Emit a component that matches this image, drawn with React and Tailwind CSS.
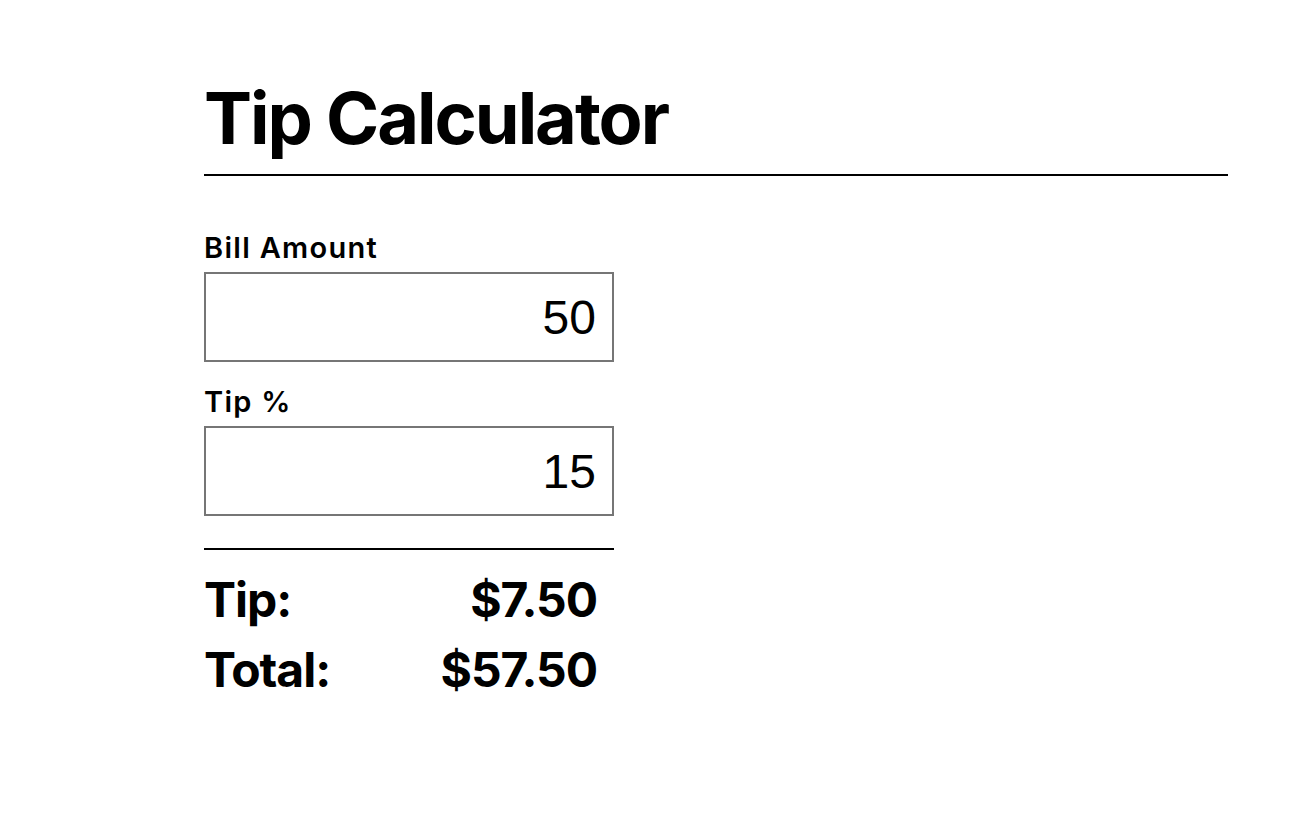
import { useState } from 'react';

export default function App() {
  const [bill, setBill] = useState('50');
  const [tip, setTip] = useState('15');

  const billNum = parseFloat(bill) || 0;
  const tipNum = parseFloat(tip) || 0;
  const tipAmount = (billNum * tipNum) / 100;
  const total = billNum + tipAmount;

  return (
    <div className="min-h-screen bg-white text-black font-['Inter',sans-serif] pl-[204px] pr-[88px] pt-[82px]">
      <h1 className="text-[72px] font-bold leading-none tracking-[-0.028em]">Tip Calculator</h1>
      <div className="mt-[20px] h-[2px] bg-black" />

      <div className="w-[410px] flex flex-col">
        <label className="mt-[56px] text-[29px] leading-[32px] font-semibold tracking-[0.045em]">Bill Amount</label>
        <input
          type="text"
          inputMode="decimal"
          value={bill}
          onChange={e => setBill(e.target.value)}
          className="mt-[8px] h-[90px] w-full border-2 border-[#767676] bg-white px-[16px] text-right text-[48px] font-['Liberation_Sans',Arial,sans-serif] outline-none"
        />

        <label className="mt-[24px] text-[29px] leading-[32px] font-semibold tracking-[0.045em]">Tip %</label>
        <input
          type="text"
          inputMode="decimal"
          value={tip}
          onChange={e => setTip(e.target.value)}
          className="mt-[8px] h-[90px] w-full border-2 border-[#767676] bg-white px-[16px] text-right text-[48px] font-['Liberation_Sans',Arial,sans-serif] outline-none"
        />

        <div className="mt-[32px] h-[2px] bg-black" />

        <div className="mt-[15px] pr-[17px] text-[48px] leading-[70px] font-bold tracking-[-0.022em]">
          <div className="flex justify-between">
            <span>Tip:</span>
            <span>${tipAmount.toFixed(2)}</span>
          </div>
          <div className="flex justify-between">
            <span>Total:</span>
            <span>${total.toFixed(2)}</span>
          </div>
        </div>
      </div>
    </div>
  );
}
